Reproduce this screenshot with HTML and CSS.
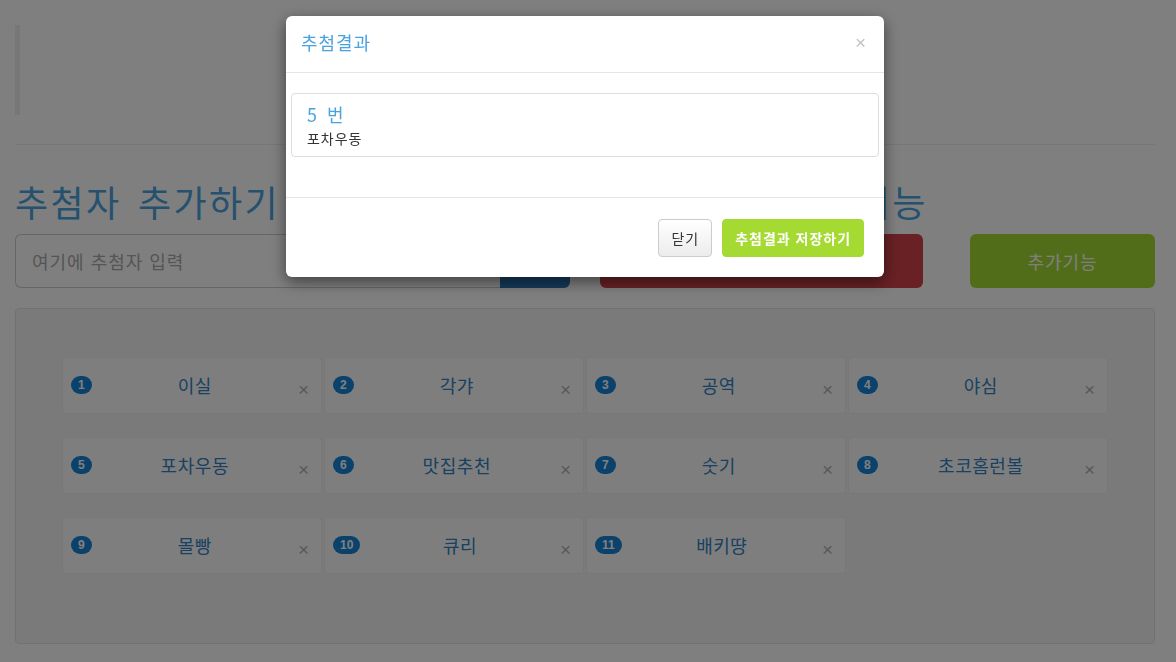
FILE: index.html
```html
<!DOCTYPE html>
<html lang="ko">
<head>
  <meta charset="UTF-8">
  <meta name="viewport" content="width=device-width, initial-scale=1.0">
  <title>추첨기</title>
  <link rel="stylesheet" href="styles.css">
</head>
<body>

<div class="page">
  <!-- Notice block -->
  <blockquote class="notice"></blockquote>
  <hr class="divider">

  <!-- Input and action buttons -->
  <div class="controls">
    <div class="col-main">
      <h1 class="heading">추첨자 추가하기</h1>
      <div class="input-group">
        <input type="text" class="name-input" placeholder="여기에 추첨자 입력">
        <button class="btn-add">추가</button>
      </div>
    </div>
    <div class="col-mid">
      <h1 class="heading">추첨하기와 추가기능</h1>
      <button class="btn-draw">추첨하기</button>
    </div>
    <div class="col-side">
      <button class="btn-extra">추가기능</button>
    </div>
  </div>

  <!-- List of entries -->
  <div class="well">
    <div class="entry"><span class="badge">1</span><span class="entry-name">이실</span><span class="close">&times;</span></div>
    <div class="entry"><span class="badge">2</span><span class="entry-name">각갸</span><span class="close">&times;</span></div>
    <div class="entry"><span class="badge">3</span><span class="entry-name">공역</span><span class="close">&times;</span></div>
    <div class="entry"><span class="badge">4</span><span class="entry-name">야심</span><span class="close">&times;</span></div>
    <div class="entry"><span class="badge">5</span><span class="entry-name">포차우동</span><span class="close">&times;</span></div>
    <div class="entry"><span class="badge">6</span><span class="entry-name">맛집추천</span><span class="close">&times;</span></div>
    <div class="entry"><span class="badge">7</span><span class="entry-name">숫기</span><span class="close">&times;</span></div>
    <div class="entry"><span class="badge">8</span><span class="entry-name">초코홈런볼</span><span class="close">&times;</span></div>
    <div class="entry"><span class="badge">9</span><span class="entry-name">몰빵</span><span class="close">&times;</span></div>
    <div class="entry"><span class="badge">10</span><span class="entry-name">큐리</span><span class="close">&times;</span></div>
    <div class="entry"><span class="badge">11</span><span class="entry-name">배키땽</span><span class="close">&times;</span></div>
  </div>
</div>

<!-- Result modal -->
<div class="backdrop"></div>
<div class="modal">
  <div class="modal-header">
    <h4 class="modal-title">추첨결과</h4>
    <span class="close">&times;</span>
  </div>
  <div class="modal-body">
    <div class="result-panel">
      <h4 class="result-number">5 번</h4>
      <p class="result-name">포차우동</p>
    </div>
  </div>
  <div class="modal-footer">
    <button class="btn-close">닫기</button>
    <button class="btn-save">추첨결과 저장하기</button>
  </div>
</div>

</body>
</html>
```

FILE: styles.css
```css
* {
  box-sizing: border-box;
}

body {
  margin: 0;
  background-color: #fff;
  font-family: "Noto Sans CJK KR", "Liberation Sans", sans-serif;
  font-size: 14px;
  letter-spacing: 0.07em;
  color: #333;
}

.page {
  width: 1140px;
  margin-left: 15px;
  padding-top: 25px;
}

.notice {
  margin: 0;
  height: 90px;
  border-left: 5px solid #eee;
}

.divider {
  margin: 29px 0 0;
  border: 0;
  border-top: 1px solid #eee;
}

/* Input row */
.controls {
  display: flex;
  align-items: flex-end;
}

.col-main {
  width: 555px;
}

.col-mid {
  width: 323px;
  margin-left: 30px;
}

.col-side {
  width: 185px;
  margin-left: auto;
}

.heading {
  margin: 37px 0 12px;
  font-size: 36px;
  font-weight: 400;
  line-height: 1.1;
  letter-spacing: 2.4px;
  word-spacing: 4px;
  color: #4aa3df;
  white-space: nowrap;
}

.col-mid .heading {
  letter-spacing: 1.9px;
  word-spacing: 0;
}

.input-group {
  display: flex;
  height: 54px;
}

.name-input {
  flex: 1;
  min-width: 0;
  padding: 14px 16px;
  font-family: inherit;
  font-size: 18px;
  letter-spacing: inherit;
  border: 1px solid #ccc;
  border-radius: 6px 0 0 6px;
  border-right: 0;
}

.name-input::placeholder {
  color: #aaa;
}

button {
  font-family: inherit;
  letter-spacing: inherit;
  cursor: pointer;
}

.btn-add,
.btn-draw,
.btn-extra {
  height: 54px;
  border: 0;
  font-size: 18px;
  color: #fff;
}

.btn-add {
  width: 70px;
  background-color: #2a76b9;
  border-radius: 0 6px 6px 0;
}

.btn-draw {
  width: 100%;
  background-color: #d2434a;
  border-radius: 6px;
}

.btn-extra {
  width: 100%;
  background-color: #a5da32;
  border-radius: 6px;
}

/* Entry list */
.well {
  margin-top: 20px;
  padding: 48px 46px 69px;
  background-color: #f5f5f5;
  border: 1px solid #e3e3e3;
  border-radius: 4px;
  display: grid;
  grid-template-columns: repeat(4, 1fr);
  column-gap: 2px;
  row-gap: 23px;
}

.entry {
  display: flex;
  align-items: center;
  height: 57px;
  padding: 0 12px 0 8px;
  background-color: #fdfdfd;
  border: 1px solid #f0f0f0;
  border-radius: 3px;
}

.badge {
  min-width: 10px;
  padding: 3px 7px;
  font-family: "Liberation Sans", sans-serif;
  font-size: 12px;
  font-weight: 700;
  line-height: 1;
  letter-spacing: 0;
  color: #fff;
  text-align: center;
  background-color: #1784d8;
  border-radius: 10px;
}

.entry-name {
  flex: 1;
  text-align: center;
  font-size: 18px;
  letter-spacing: 0.03em;
  color: #3282c2;
}

.close {
  font-family: "Liberation Sans", sans-serif;
  font-size: 21px;
  font-weight: 400;
  line-height: 1;
  letter-spacing: 0;
  color: #000;
  opacity: 0.2;
}

.entry .close {
  padding-top: 8px;
  font-size: 19px;
  opacity: 0.3;
}

/* Modal */
.backdrop {
  position: fixed;
  top: 0;
  left: 0;
  right: 0;
  bottom: 0;
  background-color: #000;
  opacity: 0.5;
}

.modal {
  position: fixed;
  top: 16px;
  left: 286px;
  width: 598px;
  background-color: #fff;
  border-radius: 6px;
  box-shadow: 0 5px 15px rgba(0, 0, 0, 0.5);
}

.modal-header {
  display: flex;
  justify-content: space-between;
  align-items: center;
  padding: 14px 18px 16px 15px;
  border-bottom: 1px solid #e5e5e5;
}

.modal-title {
  margin: 0;
  font-size: 18px;
  font-weight: 400;
  line-height: 1.42857;
  color: #4aa3df;
}

.modal-header .close {
  font-size: 19px;
  opacity: 0.25;
}

.modal-body {
  padding: 20px 5px;
}

.result-panel {
  margin-bottom: 20px;
  padding: 9px 15px 8px;
  border: 1px solid #ddd;
  border-radius: 4px;
}

.result-number {
  margin: 0 0 3px;
  font-size: 18px;
  font-weight: 400;
  line-height: 22px;
  word-spacing: 3px;
  color: #4aa3df;
}

.result-name {
  margin: 0;
  font-size: 14px;
  line-height: 20px;
  color: #333;
}

.modal-footer {
  display: flex;
  justify-content: flex-end;
  gap: 10px;
  padding: 21px 20px 20px;
  border-top: 1px solid #e5e5e5;
}

.btn-close,
.btn-save {
  height: 38px;
  padding: 0 12px;
  font-size: 14px;
  border-radius: 4px;
}

.btn-close {
  color: #333;
  background: linear-gradient(#fff, #ececec);
  border: 1px solid #ccc;
}

.btn-save {
  color: #fff;
  font-weight: 700;
  background-color: #a5da32;
  border: 1px solid #a5da32;
}
```
